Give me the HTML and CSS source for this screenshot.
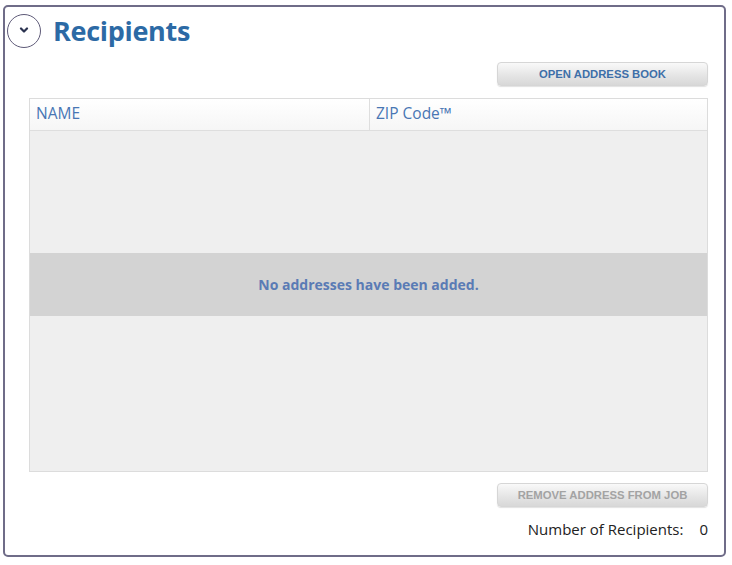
FILE: index.html
```html
<!DOCTYPE html>
<html lang="en">
<head>
    <meta charset="UTF-8">
    <meta name="viewport" content="width=device-width, initial-scale=1.0">
    <title>Recipients</title>
    <link rel="stylesheet" href="styles.css">
</head>
<body>
    <div class="panel">
        <div class="panel-head">
            <span class="toggle">
                <svg width="10" height="7" viewBox="0 0 10 7"><path d="M2 1.5 L5 4.5 L8 1.5" fill="none" stroke="#2b3350" stroke-width="2.2" stroke-linecap="round" stroke-linejoin="round"/></svg>
            </span>
            <h1>Recipients</h1>
        </div>
        <div class="actions">
            <button class="btn">OPEN ADDRESS BOOK</button>
        </div>
        <div class="grid">
            <div class="grid-head">
                <div class="col col-name">NAME</div>
                <div class="col col-zip">ZIP Code&trade;</div>
            </div>
            <div class="grid-body">
                <div class="empty">No addresses have been added.</div>
            </div>
        </div>
        <div class="actions">
            <button class="btn btn-disabled">REMOVE ADDRESS FROM JOB</button>
        </div>
        <div class="count">
            <span>Number of Recipients:</span>
            <span class="count-value">0</span>
        </div>
    </div>
</body>
</html>
```

FILE: styles.css
```css
body {
    margin: 0;
    background-color: #fff;
    font-family: "Open Sans", "Noto Sans", sans-serif;
}
.panel {
    margin: 5px 0 0 3px;
    width: 719px;
    height: 548px;
    border: 2px solid #6f6c88;
    border-radius: 5px;
    display: flex;
    flex-direction: column;
}
.panel-head {
    display: flex;
    align-items: center;
    height: 50px;
    padding-left: 2px;
}
.toggle {
    width: 32px;
    height: 32px;
    border: 1.5px solid #5e5a78;
    border-radius: 50%;
    display: flex;
    align-items: center;
    justify-content: center;
    margin-top: -3px;
}
h1 {
    margin: -4px 0 0 12px;
    font-size: 27px;
    font-weight: 700;
    color: #2c6aa5;
    letter-spacing: -0.3px;
}
.actions {
    display: flex;
    justify-content: flex-end;
    padding-right: 16px;
}
.btn {
    width: 211px;
    height: 24px;
    margin-top: 5px;
    border: 1px solid #d6d6d6;
    border-radius: 4px;
    background: linear-gradient(#f9f9f9, #e4e4e4 60%, #d8d8d8);
    box-shadow: 0 1px 1px rgba(0, 0, 0, 0.12);
    font-family: "Liberation Sans", Arial, sans-serif;
    font-size: 11.3px;
    font-weight: 700;
    color: #3e6fa8;
    padding: 0;
}
.btn-disabled {
    color: #a3a3a3;
    margin-top: 11px;
}
.grid {
    margin: 12px 0 0 24px;
    width: 677px;
    height: 372px;
    border: 1px solid #dcdcdc;
    display: flex;
    flex-direction: column;
}
.grid-head {
    display: flex;
    height: 31px;
    background: linear-gradient(#fff, #f6f6f6);
    border-bottom: 1px solid #dedede;
}
.col {
    font-size: 15.5px;
    color: #4876b4;
    line-height: 29px;
}
.col-name {
    width: 340px;
    padding-left: 6px;
    box-sizing: border-box;
    border-right: 1px solid #dedede;
    margin-right: 6px;
}
.col-zip {
    flex: 1;
}
.grid-body {
    flex: 1;
    background-color: #efefef;
}
.empty {
    height: 63px;
    margin-top: 122px;
    background-color: #d3d3d3;
    display: flex;
    align-items: center;
    justify-content: center;
    font-size: 14px;
    font-weight: 700;
    color: #5a7bb5;
}
.count {
    display: flex;
    justify-content: flex-end;
    gap: 16px;
    padding-right: 16px;
    margin-top: 12px;
    font-size: 15px;
    color: #222;
}
```
